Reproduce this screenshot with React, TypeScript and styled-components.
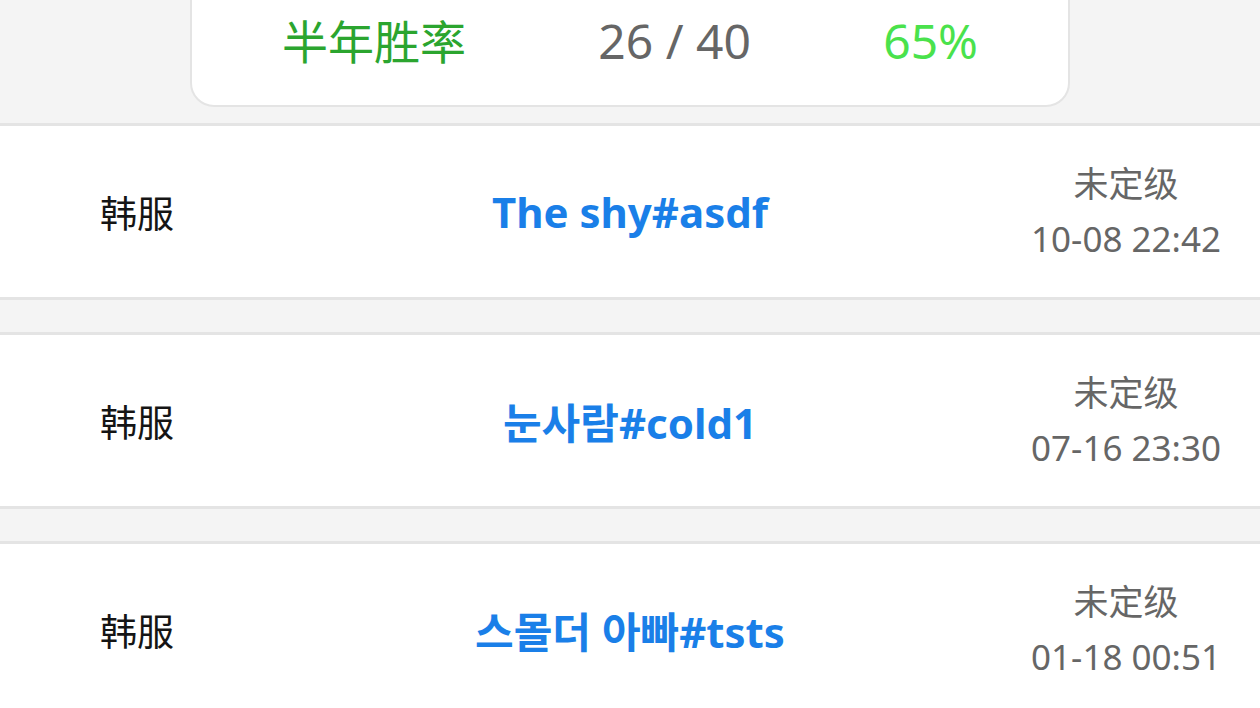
import styled, { createGlobalStyle } from 'styled-components';

const GlobalStyle = createGlobalStyle`
	html, body {
		margin: 0;
		padding: 0;
		background: #f4f4f4;
		overflow: hidden;
	}
	body {
		font-family: 'Noto Sans', 'Noto Sans CJK SC', sans-serif;
	}
`;

const Page = styled.div`
	display: flex;
	flex-direction: column;
	width: 1260px;
	height: 708px;
	overflow: hidden;
	background: #f4f4f4;
`;

const SummaryCard = styled.div`
	flex-shrink: 0;
	display: flex;
	align-items: center;
	justify-content: space-between;
	box-sizing: border-box;
	width: 880px;
	height: 132px;
	margin: -25px auto 16px;
	padding: 0 90px;
	background: #ffffff;
	border: 2px solid #e4e4e4;
	border-radius: 24px;
`;

const StatText = styled.span<{ $color: string }>`
	font-size: 46px;
	line-height: 1;
	color: ${({ $color }) => $color};
`;

const StatNumber = styled(StatText)`
	font-size: 48px;
`;

const RecordList = styled.div`
	flex-shrink: 0;
	display: flex;
	flex-direction: column;
	gap: 32px;
`;

const RecordRow = styled.div`
	flex-shrink: 0;
	display: grid;
	grid-template-columns: 1fr 1fr 1fr;
	align-items: center;
	height: 171px;
	background: #ffffff;
	border-top: 3px solid #e4e4e4;
	border-bottom: 3px solid #e4e4e4;
`;

const Server = styled.div`
	padding-left: 100px;
	font-size: 37px;
	color: #151515;
`;

const PlayerName = styled.div`
	justify-self: center;
	white-space: nowrap;
	font-family: 'Noto Sans', 'Noto Sans CJK KR', sans-serif;
	font-size: 42px;
	font-weight: 700;
	color: #1a7fe8;
`;

const RankInfo = styled.div`
	justify-self: end;
	display: flex;
	flex-direction: column;
	align-items: center;
	gap: 17px;
	padding-right: 39px;
	color: #666666;
	font-size: 35px;
	line-height: 38px;
`;

interface Record {
	server: string;
	name: string;
	rank: string;
	time: string;
}

const records: Record[] = [
	{ server: '韩服', name: 'The shy#asdf', rank: '未定级', time: '10-08 22:42' },
	{ server: '韩服', name: '눈사람#cold1', rank: '未定级', time: '07-16 23:30' },
	{ server: '韩服', name: '스몰더 아빠#tsts', rank: '未定级', time: '01-18 00:51' },
];

export default function App() {
	return (
		<Page>
			<GlobalStyle />
			<SummaryCard>
				<StatText $color="#2ba52f">半年胜率</StatText>
				<StatNumber $color="#666666">26 / 40</StatNumber>
				<StatNumber $color="#4ae24c">65%</StatNumber>
			</SummaryCard>
			<RecordList>
				{records.map((record) => (
					<RecordRow key={record.name}>
						<Server>{record.server}</Server>
						<PlayerName>{record.name}</PlayerName>
						<RankInfo>
							<span>{record.rank}</span>
							<span>{record.time}</span>
						</RankInfo>
					</RecordRow>
				))}
			</RecordList>
		</Page>
	);
}
